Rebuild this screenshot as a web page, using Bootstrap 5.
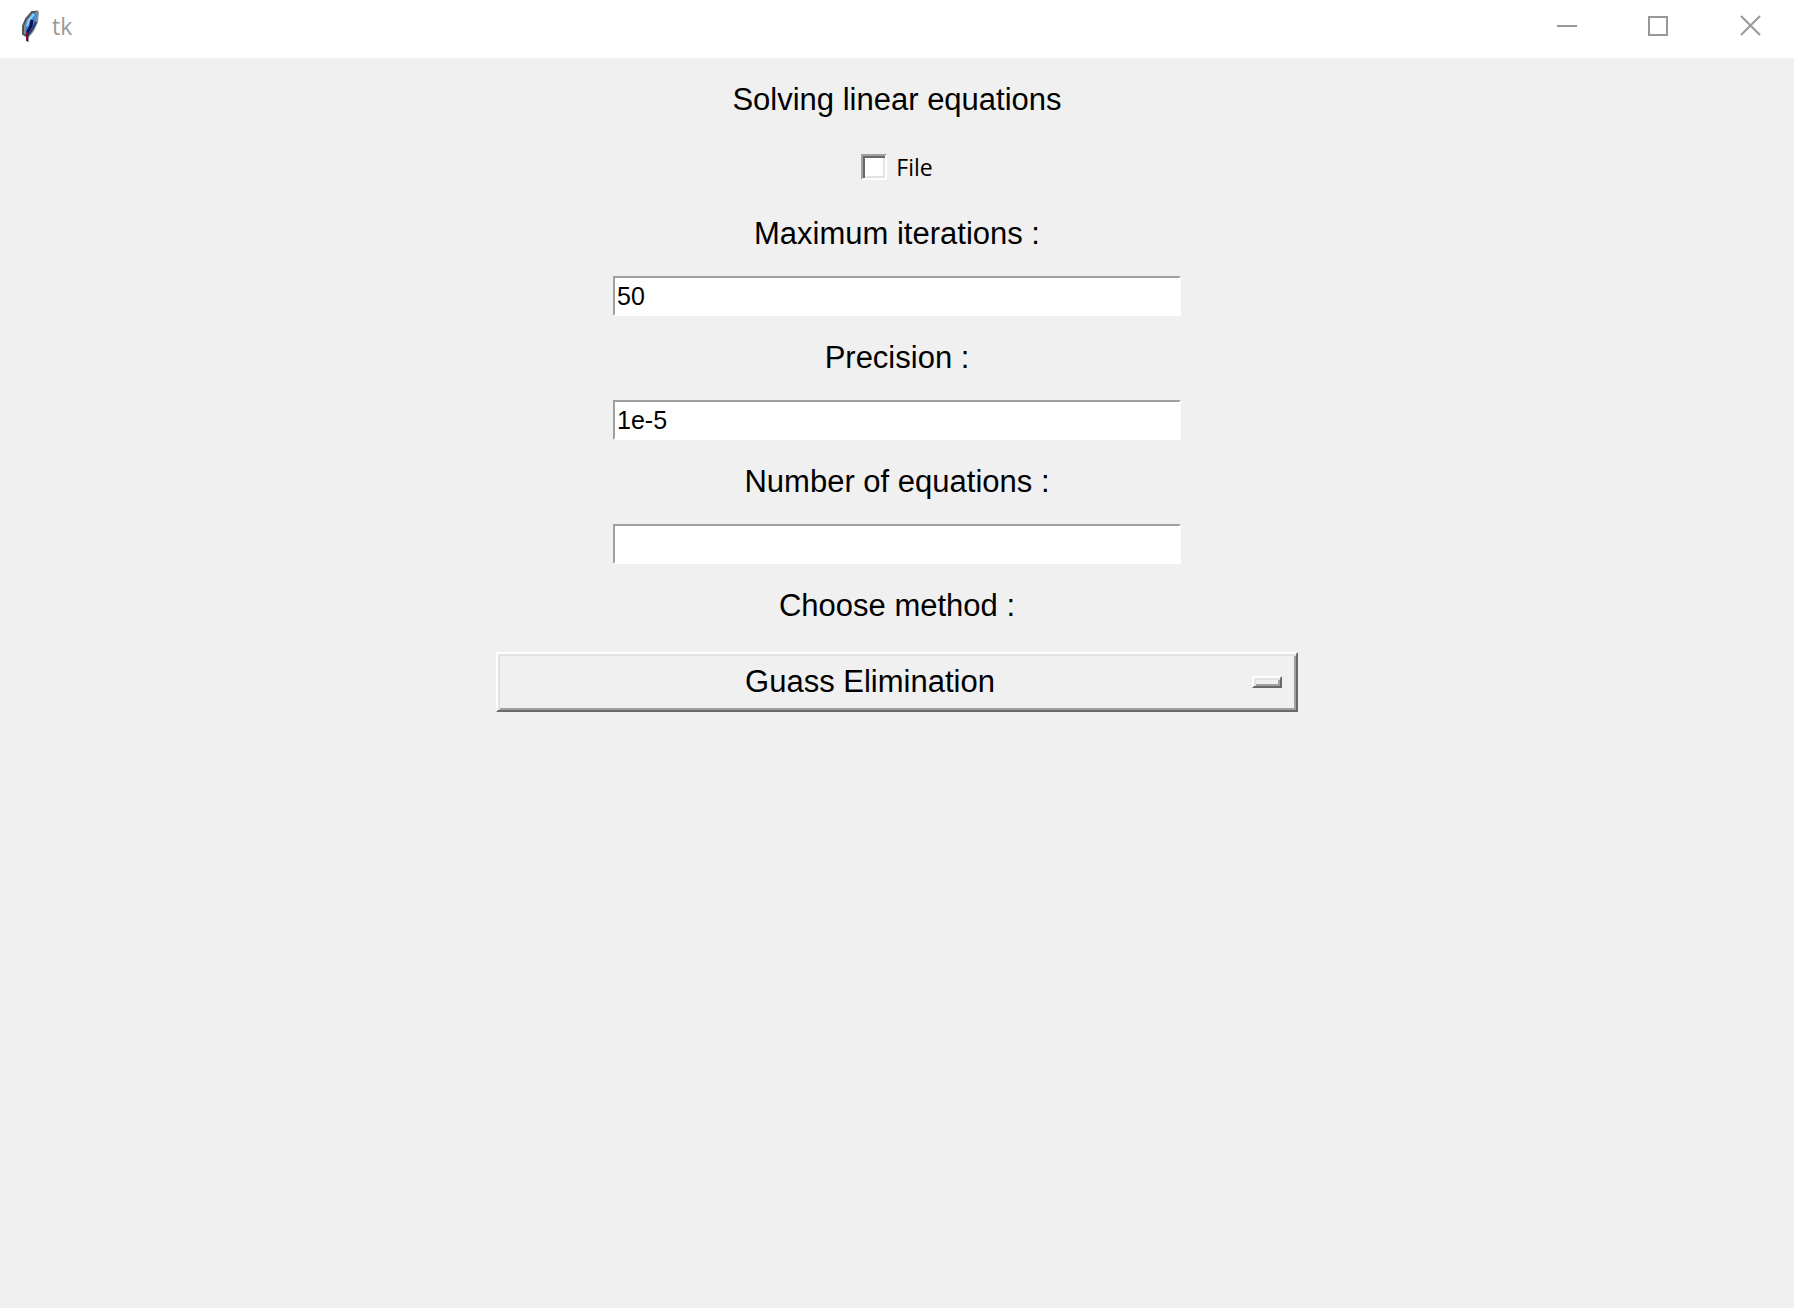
<!DOCTYPE html>
<html lang="en">
<head>
<meta charset="utf-8">
<meta name="viewport" content="width=device-width, initial-scale=1">
<title>tk</title>
<link href="https://cdn.jsdelivr.net/npm/bootstrap@5.3.0/dist/css/bootstrap.min.css" rel="stylesheet">
<style>
  body { background: #f0f0f0; color: #000; font-family: "Liberation Sans", Arial, sans-serif; }
  .titlebar { height: 58px; padding: 0 31px 6px 20px; color: #999; }
  .titlebar-name { font: 23px/32px "Open Sans", "Segoe UI", sans-serif; }
  .window-controls { gap: 68px; }
  .window-controls button { width: 24px; height: 24px; color: #999; }
  .tk-form { gap: 20px; padding: 20px 12px; }
  .tk-label { font-size: 31px; line-height: 44px; font-weight: 400; margin: 0; text-align: center; }
  .tk-check { min-height: 50px; gap: 9px; font: 23px/32px "Open Sans", "Segoe UI", sans-serif; }
  .tk-checkbox {
    appearance: none; width: 26px; height: 26px; margin: 0; background: #fff;
    border: 2px solid; border-color: #a0a0a0 #fff #fff #a0a0a0;
    box-shadow: inset 2px 2px #696969, inset -2px -2px #e3e3e3;
  }
  .tk-checkbox:checked { background: #000; background-clip: content-box; padding: 5px; }
  .tk-entry {
    width: 568px; height: 40px; padding: 0 2px; border-radius: 0; color: #000; background: #fff;
    border: 2px solid; border-color: #a0a0a0 #fff #fff #a0a0a0;
    font-size: 25px; line-height: 36px;
  }
  .tk-menu { width: 802px; }
  .tk-select {
    appearance: none; height: 60px; padding: 0 64px 0 10px; color: #000; background: #f0f0f0;
    border: 2px solid; border-color: #fff #696969 #696969 #fff; border-radius: 0;
    box-shadow: inset 2px 2px #e3e3e3, inset -2px -2px #a0a0a0;
    font-size: 31px; line-height: 44px; text-align: center; text-align-last: center;
  }
  .tk-indicator {
    right: 16px; width: 30px; height: 12px; pointer-events: none;
    border: 2px solid; border-color: #fff #696969 #696969 #fff;
    box-shadow: inset 2px 2px #e3e3e3, inset -2px -2px #a0a0a0;
  }
</style>
</head>
<body>
<header class="titlebar d-flex align-items-center bg-white">
  <svg width="20" height="36" viewBox="0 0 20 36" aria-hidden="true">
    <path d="M17 2 19 4 18 14 14 23 10 28 7 30 3 26 2 19 6 10 12 4Z" fill="#8c8c8c"/>
    <path d="M16 4H12L6 11 3 18 3 26 6 28" fill="none" stroke="#555" stroke-width="2"/>
    <path d="M16 4 17 7 15 16 11 22 7 26 5 23 6 15 10 8Z" fill="#3c8ee0"/>
    <path d="M14 6 9 12 7 18" fill="none" stroke="#8fd0fa" stroke-width="2"/>
    <path d="M12 12 11 18 8 23 7 27" fill="none" stroke="#120c4c" stroke-width="3"/>
    <path d="M16 14 13 20 9 26" fill="none" stroke="#173f76" stroke-width="2"/>
    <path d="M7 24V33" stroke="#701044" stroke-width="2"/>
    <path d="M8 26V34" stroke="#252036" stroke-width="1"/>
  </svg>
  <span class="titlebar-name ms-2 ps-1">tk</span>
  <div class="window-controls d-flex ms-auto">
    <button type="button" class="btn border-0 p-0 d-flex" aria-label="Minimize">
      <svg width="24" height="24" viewBox="0 0 24 24"><path d="M2 12H22" stroke="currentColor" stroke-width="2"/></svg>
    </button>
    <button type="button" class="btn border-0 p-0 d-flex" aria-label="Maximize">
      <svg width="24" height="24" viewBox="0 0 24 24"><path d="M2 3H20V21H2Z" fill="none" stroke="currentColor" stroke-width="2"/></svg>
    </button>
    <button type="button" class="btn border-0 p-0 d-flex" aria-label="Close">
      <svg width="24" height="24" viewBox="0 0 24 24"><path d="M2 2 21 21M21 2 2 21" stroke="currentColor" stroke-width="2"/></svg>
    </button>
  </div>
</header>
<main>
  <form class="tk-form d-flex flex-column align-items-center">
    <h1 class="tk-label">Solving linear equations</h1>
    <div class="tk-check d-flex align-items-center">
      <input class="tk-checkbox" type="checkbox" id="file">
      <label for="file">File</label>
    </div>
    <label class="tk-label" for="iterations">Maximum iterations :</label>
    <input class="tk-entry mw-100" type="text" id="iterations" value="50">
    <label class="tk-label" for="precision">Precision :</label>
    <input class="tk-entry mw-100" type="text" id="precision" value="1e-5">
    <label class="tk-label" for="equations">Number of equations :</label>
    <input class="tk-entry mw-100" type="text" id="equations">
    <label class="tk-label" for="method">Choose method :</label>
    <div class="tk-menu position-relative mw-100 mt-1">
      <select class="tk-select w-100 d-block" id="method">
        <option>Guass Elimination</option>
      </select>
      <span class="tk-indicator position-absolute top-50 translate-middle-y"></span>
    </div>
  </form>
</main>
<script src="https://cdn.jsdelivr.net/npm/bootstrap@5.3.0/dist/js/bootstrap.bundle.min.js"></script>
</body>
</html>
